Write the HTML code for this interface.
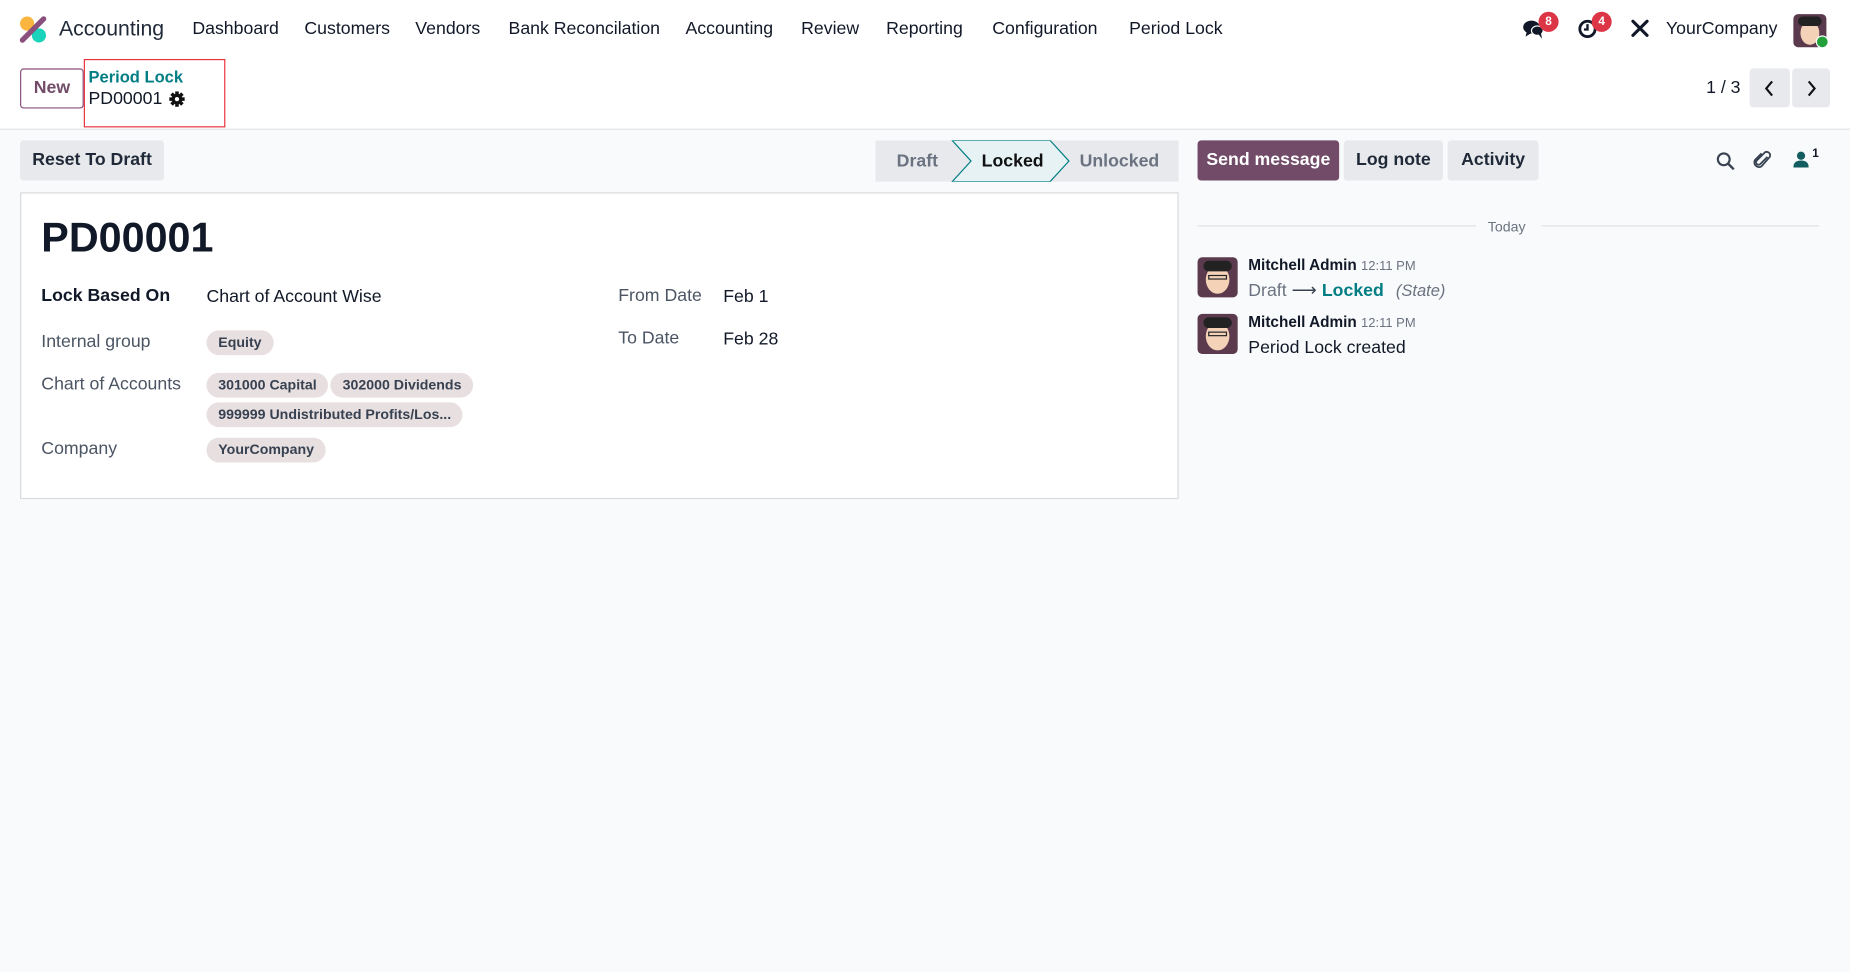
<!DOCTYPE html>
<html><head><meta charset="utf-8"><style>
*{box-sizing:border-box;margin:0;padding:0}
html,body{width:1850px;height:972px;overflow:hidden;background:#f9fafb}
#w{width:1568px;height:824px;transform:scale(1.17985);transform-origin:0 0;position:relative;font-family:"Liberation Sans",sans-serif;color:#111827;font-size:14px}
.a{position:absolute;white-space:nowrap}
.nav{position:absolute;left:0;top:0;width:1568px;height:48px;background:#fff}
.cp{position:absolute;left:0;top:48px;width:1568px;height:62px;background:#fff;border-bottom:1px solid #dee2e6}
.btn{position:absolute;background:#e7e9ed;border-radius:3px;font-weight:bold;font-size:15px;color:#1f2937;text-align:center;line-height:34px;height:34px}
.tag{display:inline-block;background:#e8e0e0;border-radius:11px;padding:0 10px;height:21px;line-height:21px;font-size:12px;font-weight:bold;color:#374151;margin-right:2px}
.lbl{color:#4b5563;font-size:15px}
.badge{position:absolute;width:17px;height:17px;border-radius:50%;background:#dc3545;color:#fff;font-size:10px;font-weight:bold;text-align:center;line-height:17px}
.av{position:absolute;width:34px;height:34px;border-radius:4px;background:#5a3a4c;overflow:hidden}
</style></head><body><div id="w">
<div class="nav">
 <svg class="a" style="left:16px;top:13px" width="24" height="24" viewBox="0 0 24 24"><circle cx="7" cy="7" r="6" fill="#f9b53e"/><circle cx="17" cy="17" r="6" fill="#1ad3bb"/><path d="M3 21 L21 3" stroke="#8a4f7d" stroke-width="4.5" stroke-linecap="round"/></svg>
 <div class="a" style="left:50px;top:14px;font-size:18px;color:#1f2937">Accounting</div>
 <div class="a" style="left:163px;top:16px;font-size:15px">Dashboard</div>
 <div class="a" style="left:258px;top:16px;font-size:15px">Customers</div>
 <div class="a" style="left:352px;top:16px;font-size:15px">Vendors</div>
 <div class="a" style="left:431px;top:16px;font-size:15px">Bank Reconcilation</div>
 <div class="a" style="left:581px;top:16px;font-size:15px">Accounting</div>
 <div class="a" style="left:679px;top:16px;font-size:15px">Review</div>
 <div class="a" style="left:751px;top:16px;font-size:15px">Reporting</div>
 <div class="a" style="left:841px;top:16px;font-size:15px">Configuration</div>
 <div class="a" style="left:957px;top:16px;font-size:15px">Period Lock</div>
 <svg class="a" style="left:1290px;top:16px" width="20" height="18" viewBox="0 0 20 18"><ellipse cx="8" cy="7" rx="7" ry="5.5" fill="#111827"/><path d="M4 11 L3 15 L8 12Z" fill="#111827"/><ellipse cx="13" cy="10" rx="5" ry="4" fill="#111827" stroke="#fff" stroke-width="1"/><path d="M14 13 L17 17 L16 12Z" fill="#111827"/></svg>
 <div class="badge" style="left:1304px;top:10px">8</div>
 <svg class="a" style="left:1337px;top:16px" width="17" height="17" viewBox="0 0 17 17"><circle cx="8.5" cy="8.5" r="6.5" fill="none" stroke="#111827" stroke-width="2.4"/><path d="M8.5 4.5V9H5.5" fill="none" stroke="#111827" stroke-width="2"/></svg>
 <div class="badge" style="left:1349px;top:10px">4</div>
 <svg class="a" style="left:1381px;top:15px" width="18" height="18" viewBox="0 0 18 18"><path d="M3 3 L15 15 M15 3 L3 15" stroke="#111827" stroke-width="2.6" stroke-linecap="round"/></svg>
 <div class="a" style="left:1412px;top:16px;font-size:15px">YourCompany</div>
 <div class="av" style="left:1520px;top:12px;width:28px;height:28px"><div style="position:absolute;left:6px;top:6px;width:16px;height:20px;border-radius:50%;background:#f3d2b8"></div><div style="position:absolute;left:4px;top:2px;width:20px;height:8px;background:#222;border-radius:5px"></div></div>
 <div class="a" style="left:1539px;top:30px;width:11px;height:11px;border-radius:50%;background:#22a03a;border:1px solid #fff"></div>
</div>
<div class="cp">
 <div class="a" style="left:17px;top:10px;width:54px;height:34px;border:1px solid #8a4f7d;border-radius:3px;color:#714b67;font-weight:bold;font-size:15px;text-align:center;line-height:32px">New</div>
 <div class="a" style="left:71px;top:2px;width:120px;height:58px;border:1.5px solid #e8303a"></div>
 <div class="a" style="left:75px;top:9px;color:#017e84;font-size:14px;font-weight:bold">Period Lock</div>
 <div class="a" style="left:75px;top:27px;font-size:15px">PD00001</div>
 <svg class="a" style="left:143px;top:29px" width="14" height="14" viewBox="0 0 14 14"><g fill="#111"><circle cx="7" cy="7" r="4.5"/><rect x="5.5" y="0.5" width="3" height="13"/><rect x="0.5" y="5.5" width="13" height="3"/><rect x="5.5" y="0.5" width="3" height="13" transform="rotate(45 7 7)"/><rect x="5.5" y="0.5" width="3" height="13" transform="rotate(-45 7 7)"/></g><circle cx="7" cy="7" r="1.8" fill="#fff"/></svg>
 <div class="a" style="left:1446px;top:18px;font-size:15px">1 / 3</div>
 <div class="btn" style="left:1483px;top:10px;width:34px;height:33px"><svg width="12" height="14" viewBox="0 0 12 14" style="margin-top:10px"><path d="M8 1 L3 7 L8 13" fill="none" stroke="#111" stroke-width="1.8"/></svg></div>
 <div class="btn" style="left:1519px;top:10px;width:32px;height:33px"><svg width="12" height="14" viewBox="0 0 12 14" style="margin-top:10px"><path d="M4 1 L9 7 L4 13" fill="none" stroke="#111" stroke-width="1.8"/></svg></div>
</div>
<div class="btn" style="left:17px;top:119px;width:122px">Reset To Draft</div>
<svg class="a" style="left:742px;top:119px" width="257" height="35" viewBox="0 0 257 35"><rect width="257" height="35" fill="#e7e9ed"/><path d="M65 0 H148 L164 17.5 L148 35 H65 L81 17.5Z" fill="#e6f2f3" stroke="#017e84" stroke-width="1"/></svg>
<div class="a" style="left:760px;top:128px;font-size:15px;color:#6b7280;font-weight:bold">Draft</div>
<div class="a" style="left:832px;top:128px;font-size:15px;color:#111;font-weight:bold">Locked</div>
<div class="a" style="left:915px;top:128px;font-size:15px;color:#6b7280;font-weight:bold">Unlocked</div>
<div class="a" style="left:17px;top:163px;width:982px;height:260px;background:#fff;border:1px solid #d8dadd"></div>
<div class="a" style="left:35px;top:182px;font-size:35px;font-weight:bold">PD00001</div>
<div class="a" style="left:35px;top:242px;font-size:15px;font-weight:bold">Lock Based On</div>
<div class="a" style="left:175px;top:243px;font-size:15px">Chart of Account Wise</div>
<div class="a lbl" style="left:35px;top:281px">Internal group</div>
<div class="a" style="left:175px;top:280px"><span class="tag">Equity</span></div>
<div class="a lbl" style="left:35px;top:317px">Chart of Accounts</div>
<div class="a" style="left:175px;top:316px"><span class="tag">301000 Capital</span><span class="tag">302000 Dividends</span></div>
<div class="a" style="left:175px;top:341px"><span class="tag">999999 Undistributed Profits/Los...</span></div>
<div class="a lbl" style="left:35px;top:372px">Company</div>
<div class="a" style="left:175px;top:371px"><span class="tag">YourCompany</span></div>
<div class="a lbl" style="left:524px;top:242px">From Date</div>
<div class="a" style="left:613px;top:243px;font-size:15px">Feb 1</div>
<div class="a lbl" style="left:524px;top:278px">To Date</div>
<div class="a" style="left:613px;top:279px;font-size:15px">Feb 28</div>
<div class="btn" style="left:1015px;top:119px;width:120px;background:#714b67;color:#fff">Send message</div>
<div class="btn" style="left:1139px;top:119px;width:84px">Log note</div>
<div class="btn" style="left:1227px;top:119px;width:77px">Activity</div>
<svg class="a" style="left:1454px;top:128px" width="17" height="17" viewBox="0 0 17 17"><circle cx="7" cy="7" r="5" fill="none" stroke="#374151" stroke-width="1.8"/><path d="M11 11 L15.5 15.5" stroke="#374151" stroke-width="2"/></svg>
<svg class="a" style="left:1486px;top:127px" width="17" height="18" viewBox="0 0 17 18"><path d="M12 6 L6 12 a2 2 0 0 1-3-3 L10 2 a3 3 0 0 1 4 4 L7 14 a4 4 0 0 1-5.5-5.5 L7 3" fill="none" stroke="#374151" stroke-width="1.5"/></svg>
<svg class="a" style="left:1520px;top:128px" width="13" height="14" viewBox="0 0 13 14"><circle cx="6.5" cy="4" r="3.5" fill="#135c5f"/><path d="M0 14 Q0 8 6.5 8 Q13 8 13 14Z" fill="#135c5f"/></svg>
<div class="a" style="left:1536px;top:125px;font-size:10px;font-weight:bold">1</div>
<div class="a" style="left:1015px;top:191px;width:236px;height:1px;background:#dee2e6"></div>
<div class="a" style="left:1306px;top:191px;width:236px;height:1px;background:#dee2e6"></div>
<div class="a" style="left:1261px;top:185px;font-size:12px;color:#6b7280">Today</div>
<div class="av" style="left:1015px;top:218px"><div style="position:absolute;left:7px;top:7px;width:20px;height:24px;border-radius:50%;background:#f3d2b8"></div><div style="position:absolute;left:5px;top:3px;width:24px;height:9px;background:#222;border-radius:5px"></div><div style="position:absolute;left:9px;top:15px;width:16px;height:4px;border:1.5px solid #222"></div></div>
<div class="av" style="left:1015px;top:266px"><div style="position:absolute;left:7px;top:7px;width:20px;height:24px;border-radius:50%;background:#f3d2b8"></div><div style="position:absolute;left:5px;top:3px;width:24px;height:9px;background:#222;border-radius:5px"></div><div style="position:absolute;left:9px;top:15px;width:16px;height:4px;border:1.5px solid #222"></div></div>
<div class="a" style="left:1058px;top:217px;font-size:13px;font-weight:bold">Mitchell Admin <span style="font-weight:normal;font-size:11px;color:#6b7280">12:11 PM</span></div>
<div class="a" style="left:1058px;top:237px;font-size:15px;color:#6b7280">Draft <span style="color:#374151">⟶</span> <span style="color:#017e84;font-weight:bold">Locked</span> <i style="margin-left:6px;font-size:14px">(State)</i></div>
<div class="a" style="left:1058px;top:265px;font-size:13px;font-weight:bold">Mitchell Admin <span style="font-weight:normal;font-size:11px;color:#6b7280">12:11 PM</span></div>
<div class="a" style="left:1058px;top:286px;font-size:15px">Period Lock created</div>
</div></body></html>
